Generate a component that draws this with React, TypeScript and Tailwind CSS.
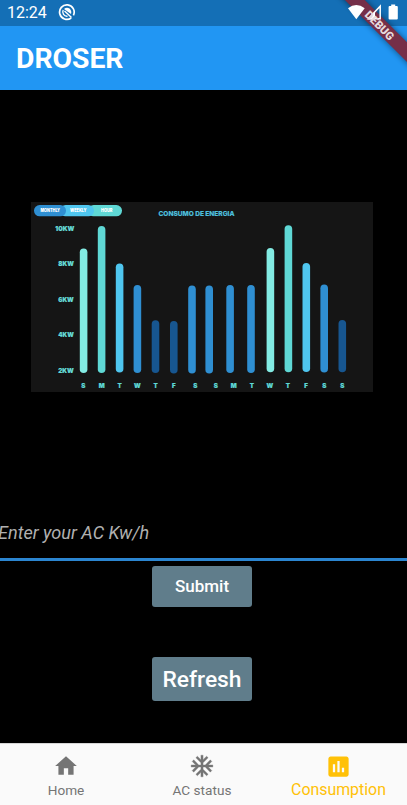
import React from 'react';
import { MdHome, MdAssessment } from 'react-icons/md';

const bars: [number, number, number, string][] = [
  [83.6, 248.5, 373, '#83ebe3'],
  [101.6, 226, 373, '#5fd8d5'],
  [119.6, 263.5, 372.5, '#4fc6ef'],
  [137.4, 285, 373, '#2f8fd2'],
  [155.5, 320.3, 373, '#175690'],
  [173.8, 321, 373.5, '#175690'],
  [192, 285.6, 373.5, '#2f8fd2'],
  [209.2, 285.6, 373.5, '#2f8fd2'],
  [230.1, 285, 373, '#2f8fd2'],
  [251, 285, 373, '#2f8fd2'],
  [270.4, 248, 372.3, '#83ebe3'],
  [288.4, 225.3, 372.3, '#5fd8d5'],
  [306.3, 263, 372, '#4fc6ef'],
  [324.2, 284.5, 372.5, '#2f8fd2'],
  [342.3, 320, 372.3, '#175690'],
];

const days: [number, string][] = [
  [83.4, 'S'], [101.6, 'M'], [119.5, 'T'], [137.4, 'W'], [155.5, 'T'],
  [173.8, 'F'], [195.3, 'S'], [215.8, 'S'], [233.8, 'M'], [251.8, 'T'],
  [269.8, 'W'], [287.8, 'T'], [306, 'F'], [324.3, 'S'], [342.2, 'S'],
];

const levels: [number, string, number, number][] = [
  [230.9, '10KW', 55.3, 19],
  [266.2, '8KW', 58.3, 15.5],
  [301.9, '6KW', 58.3, 15.5],
  [337.3, '4KW', 58.3, 15.5],
  [372.6, '2KW', 58.3, 15.5],
];

function Chart() {
  return (
    <svg className="block h-[190px] w-[342px] bg-[#151515] font-['Inter',sans-serif]" viewBox="31 202 342 190">
      <rect x="88" y="205" width="34" height="11.3" rx="5.6" fill="#5fd8d5" />
      <rect x="60" y="205" width="34" height="11.3" rx="5.6" fill="#4fc6ef" />
      <rect x="34" y="205" width="32" height="11.3" rx="5.6" fill="#2f8fd2" />
      <g fill="#fff" fontSize="4.2" fontWeight="900">
        <text x="40.5" y="212.4" textLength="19.5" lengthAdjust="spacingAndGlyphs">MONTHLY</text>
        <text x="70" y="212.4" textLength="16.5" lengthAdjust="spacingAndGlyphs">WEEKLY</text>
        <text x="101" y="212.4" textLength="11.5" lengthAdjust="spacingAndGlyphs">HOUR</text>
      </g>
      <text x="158.5" y="215.6" fontSize="6.6" fontWeight="800" fill="#4dbfdc" stroke="#4dbfdc" strokeWidth=".15" textLength="76" lengthAdjust="spacingAndGlyphs">CONSUMO DE ENERGIA</text>
      <g fill="#66dcd8" stroke="#66dcd8" strokeWidth=".15" fontSize="6.4" fontWeight="900">
        {levels.map(([y, label, x, w]) => (
          <text key={label} x={x} y={y} textLength={w} lengthAdjust="spacingAndGlyphs">{label}</text>
        ))}
      </g>
      {bars.map(([x, top, bottom, color]) => (
        <rect key={x} x={x - 3.8} y={top} width="7.6" height={bottom - top} rx="3.8" fill={color} />
      ))}
      <g fill="#5fd8d5" stroke="#5fd8d5" strokeWidth=".2" fontSize="6.2" fontWeight="900" textAnchor="middle">
        {days.map(([x, d]) => (
          <text key={x} x={x} y="387.8">{d}</text>
        ))}
      </g>
    </svg>
  );
}

function Snowflake() {
  return (
    <svg className="h-[26px] w-[26px]" viewBox="0 0 24 24" fill="currentColor" stroke="currentColor" strokeWidth=".3">
      <path d="M22 11h-4.17l3.24-3.24-1.41-1.42L15 11h-2V9l4.66-4.66-1.42-1.41L13 6.170V2h-2v4.170L7.760 2.930 6.340 4.340 11 9v2H9L4.340 6.340 2.930 7.760 6.170 11H2v2h4.170l-3.240 3.240 1.410 1.420L9 13h2v2l-4.660 4.660 1.420 1.410L11 17.830V22h2v-4.170l3.240 3.240 1.420-1.410L13 15v-2h2l4.660 4.660 1.410-1.420L17.830 13H22z" />
    </svg>
  );
}

function StatusIcons() {
  return (
    <svg className="absolute top-0 right-0 h-[90px] w-[87px] font-['Roboto',sans-serif]" viewBox="320 0 87 90">
      <defs>
        <filter id="shade" x="-20%" y="-150%" width="140%" height="400%">
          <feGaussianBlur stdDeviation="3" />
        </filter>
      </defs>
      <g transform="translate(380.3 25.5) rotate(45)">
        <rect x="-55" y="-7" width="110" height="14" fill="#000" opacity=".5" filter="url(#shade)" />
        <rect x="-55" y="-7" width="110" height="14" fill="#752f48" />
      </g>
      <path d="M348 8.3Q356.3 1.5 364.7 8.3L356.3 19.3Z" fill="#fff" />
      <path d="M380.2 6.2V18.8H368.3Z" fill="none" stroke="#fff" strokeWidth="1.5" />
      <path d="M368 19.5L375 12V19.5Z" fill="#fff" />
      <path d="M391.2 4.5h4v1.6h1.6q1 0 1 1v11.4q0 1-1 1h-7.2q-1 0-1-1V7.1q0-1 1-1h1.6Z" fill="#fff" />
      <text transform="translate(379.6 25.5) rotate(45)" y="4" fontSize="11.3" fontWeight="900" fill="#e6dadd" textAnchor="middle" textLength="36" lengthAdjust="spacingAndGlyphs">DEBUG</text>
    </svg>
  );
}

export default function App() {
  return (
    <div className="relative flex h-[805px] w-[407px] flex-col overflow-hidden bg-black font-['Roboto',sans-serif]">
      <div className="flex h-[26px] shrink-0 items-center bg-[#146fb6] pl-[7px] text-white">
        <span className="w-[51px] text-[16px] leading-[26px]">12:24</span>
        <svg className="mb-[2px] h-[18px] w-[18px]" viewBox="0 0 18 18" fill="none" stroke="#fff">
          <path d="M13.2 15A7.3 7.3 0 1 1 15.4 12.4" strokeWidth="1.7" />
          <path d="M9.5 13.2A4.3 4.3 0 0 1 5.2 7" strokeWidth="1.4" />
          <path d="M6 6Q8.5 3.8 11.5 5.4Q14 7.5 13 11Z" fill="#fff" stroke="none" />
          <path d="M6.5 8L13.5 14.5" strokeWidth="1.4" />
        </svg>
      </div>
      <header className="flex h-16 shrink-0 items-center bg-[#2196f3] pl-4">
        <h1 className="text-[28px] leading-8 font-bold text-white">
          <svg className="block h-8 w-[110px]">
            <text x="0" y="25.5" fill="#fff" textLength="107.5" lengthAdjust="spacingAndGlyphs">DROSER</text>
          </svg>
        </h1>
      </header>
      <main className="flex h-[653px] shrink-0 flex-col">
        <div className="mt-[112px] ml-[31px]"><Chart /></div>
        <div className="mt-[118px] flex h-[51px] items-center border-b-[3px] border-[#2b85d0] pb-[3px]">
          <span className="-ml-[2px] text-[18.1px] text-[#b0b0b0] italic">Enter your AC Kw/h</span>
        </div>
        <button className="mt-[5px] ml-[152px] h-[41px] w-[100px] rounded-[3px] bg-[#607d8b] pt-px text-[17px] font-medium text-white">Submit</button>
        <button className="mt-[50px] ml-[152px] h-[44px] w-[100px] rounded-[3px] bg-[#607d8b] pt-[2px] text-[22.8px] font-medium text-white">Refresh</button>
      </main>
      <nav className="flex h-[62px] shrink-0 border-t border-[#d5d5d5] bg-[#fafafa] text-[#757575]">
        <div className="flex w-[132px] flex-col items-center pt-[9px]">
          <MdHome size={26} />
          <span className="mt-px text-[13.6px] leading-5">Home</span>
        </div>
        <div className="flex w-[140px] flex-col items-center pt-[9px]">
          <Snowflake />
          <span className="mt-px text-[13.6px] leading-5">AC status</span>
        </div>
        <div className="flex w-[133px] flex-col items-center pt-[9px] text-[#ffc107]">
          <MdAssessment size={27} />
          <span className="text-[15.9px] leading-5">Consumption</span>
        </div>
      </nav>
      <StatusIcons />
    </div>
  );
}
